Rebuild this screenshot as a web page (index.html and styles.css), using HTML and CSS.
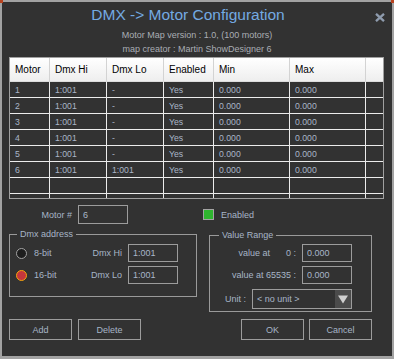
FILE: index.html
```html
<!DOCTYPE html>
<html lang="en">
<head>
    <meta charset="UTF-8">
    <title>DMX -> Motor Configuration</title>
    <link rel="stylesheet" href="styles.css">
</head>
<body>

    <div class="window">
        <!-- Title bar -->
        <div class="titlebar">
            <h1 class="title">DMX -&gt; Motor Configuration</h1>
            <button class="close-btn" title="Close">
                <svg width="10" height="9" viewBox="0 0 10 9">
                    <path d="M1 0.8 L9 8.2 M9 0.8 L1 8.2" stroke="#8e9bad" stroke-width="2.3" fill="none"/>
                </svg>
            </button>
        </div>

        <!-- Map info -->
        <div class="info">
            <p>Motor Map version : 1.0, (100 motors)</p>
            <p>map creator : Martin ShowDesigner 6</p>
        </div>

        <!-- Motor list -->
        <div class="grid">
            <table class="motor-table">
                <colgroup>
                    <col class="c-motor">
                    <col class="c-hi">
                    <col class="c-lo">
                    <col class="c-enabled">
                    <col class="c-min">
                    <col class="c-max">
                    <col>
                </colgroup>
                <thead>
                    <tr>
                        <th>Motor</th><th>Dmx Hi</th><th>Dmx Lo</th><th>Enabled</th><th>Min</th><th>Max</th><th></th>
                    </tr>
                </thead>
                <tbody>
                    <tr><td>1</td><td>1:001</td><td>-</td><td>Yes</td><td>0.000</td><td>0.000</td><td></td></tr>
                    <tr><td>2</td><td>1:001</td><td>-</td><td>Yes</td><td>0.000</td><td>0.000</td><td></td></tr>
                    <tr><td>3</td><td>1:001</td><td>-</td><td>Yes</td><td>0.000</td><td>0.000</td><td></td></tr>
                    <tr><td>4</td><td>1:001</td><td>-</td><td>Yes</td><td>0.000</td><td>0.000</td><td></td></tr>
                    <tr><td>5</td><td>1:001</td><td>-</td><td>Yes</td><td>0.000</td><td>0.000</td><td></td></tr>
                    <tr><td>6</td><td>1:001</td><td>1:001</td><td>Yes</td><td>0.000</td><td>0.000</td><td></td></tr>
                    <tr><td>&nbsp;</td><td></td><td></td><td></td><td></td><td></td><td></td></tr>
                    <tr><td>&nbsp;</td><td></td><td></td><td></td><td></td><td></td><td></td></tr>
                </tbody>
            </table>
        </div>

        <!-- Motor number and enabled -->
        <div class="motor-row">
            <label class="motor-label" for="motor-num">Motor #</label>
            <input class="field field-tall" id="motor-num" type="text" value="6">
            <input class="check" id="enabled" type="checkbox" checked>
            <label class="check-label" for="enabled">Enabled</label>
        </div>

        <div class="groups">
            <!-- Dmx address -->
            <fieldset class="group group-dmx">
                <legend>Dmx address</legend>
                <div class="dmx-row">
                    <input class="radio" id="bit8" type="radio" name="bits">
                    <label class="radio-label" for="bit8">8-bit</label>
                    <label class="dmx-label" for="dmx-hi">Dmx Hi</label>
                    <input class="field" id="dmx-hi" type="text" value="1:001">
                </div>
                <div class="dmx-row">
                    <input class="radio" id="bit16" type="radio" name="bits" checked>
                    <label class="radio-label" for="bit16">16-bit</label>
                    <label class="dmx-label" for="dmx-lo">Dmx Lo</label>
                    <input class="field" id="dmx-lo" type="text" value="1:001">
                </div>
            </fieldset>

            <!-- Value range -->
            <fieldset class="group group-range">
                <legend>Value Range</legend>
                <div class="range-row">
                    <label for="val-0">value at<span class="zero">0 :</span></label>
                    <input class="field" id="val-0" type="text" value="0.000">
                </div>
                <div class="range-row">
                    <label for="val-max">value at 65535 :</label>
                    <input class="field" id="val-max" type="text" value="0.000">
                </div>
                <div class="range-row unit-row">
                    <label>Unit :</label>
                    <div class="select">
                        <span class="select-text">&lt; no unit &gt;</span>
                        <span class="select-arrow">
                            <svg width="10" height="9" viewBox="0 0 10 9">
                                <path d="M0 0.5 H10 L5 8.5 Z" fill="#cfcfcf"/>
                            </svg>
                        </span>
                    </div>
                </div>
            </fieldset>
        </div>

        <!-- Buttons -->
        <div class="buttons">
            <button class="btn">Add</button>
            <button class="btn">Delete</button>
            <button class="btn btn-ok">OK</button>
            <button class="btn btn-cancel">Cancel</button>
        </div>
    </div>

</body>
</html>
```

FILE: styles.css
```css
* {
    box-sizing: border-box;
}

html, body {
    margin: 0;
}

body {
    background-color: #323232;
    font-family: "Liberation Sans", Arial, sans-serif;
    font-size: 9px;
    color: #a7b5c7;
}

.window {
    position: relative;
    width: 394px;
    height: 359px;
    border: 2px solid #a2a2a2;
    border-bottom-width: 3px;
    background-color: #323232;
}

/* little red corners of the frame */
.window::before, .window::after {
    content: "";
    position: absolute;
    top: -2px;
    width: 3px;
    height: 3px;
    background-color: #b8421e;
}

.window::before {
    left: -2px;
}

.window::after {
    right: -2px;
}

.titlebar {
    display: flex;
    height: 20px;
    margin-top: 3px;
}

.title {
    flex: 1;
    margin: 0;
    font-size: 15.5px;
    font-weight: normal;
    line-height: 20px;
    text-align: center;
    color: #74aae2;
}

.close-btn {
    width: 18px;
    height: 20px;
    margin: 0;
    padding: 5px 0 0 1px;
    border: none;
    background: none;
    text-align: left;
    line-height: 0;
    cursor: pointer;
}

.info {
    margin-top: 3px;
    text-align: center;
    line-height: 14px;
    color: #aaaeb4;
}

.info p {
    margin: 0;
}

/* table */
.grid {
    width: 375px;
    height: 142px;
    margin: 1px 0 0 7px;
    border: 1px solid #a0a0a0;
    overflow: hidden;
}

.motor-table {
    width: 373px;
    table-layout: fixed;
    border-collapse: separate;
    border-spacing: 0;
}

.c-motor { width: 40px; }
.c-hi { width: 57px; }
.c-lo { width: 57px; }
.c-enabled { width: 50px; }
.c-min { width: 76px; }
.c-max { width: 76px; }

.motor-table th {
    padding: 0 0 0 5px;
    background: linear-gradient(#ffffff, #eeeeee);
    border-right: 1px solid #d3d3d3;
    border-bottom: 1px solid #dcdcdc;
    font-size: 10px;
    font-weight: normal;
    line-height: 23px;
    text-align: left;
    color: #000000;
    white-space: nowrap;
    overflow: hidden;
}

.motor-table td {
    padding: 2px 0 0 5px;
    border-right: 1px solid #ececec;
    border-bottom: 1px solid #ececec;
    font-size: 8.7px;
    line-height: 13px;
    color: #a9b6c8;
    white-space: nowrap;
    overflow: hidden;
}

.motor-table th:last-child, .motor-table td:last-child {
    border-right: none;
}

/* inputs */
.field {
    width: 50px;
    height: 18px;
    padding: 0 4px;
    border: 1px solid #9c9c9c;
    background-color: #323232;
    font: inherit;
    color: #a9b6c8;
    outline: none;
}

.field-tall {
    height: 19px;
}

.motor-row {
    display: flex;
    align-items: center;
    height: 19px;
    margin: 6px 0 0 7px;
}

.motor-label {
    width: 63px;
    margin-right: 6px;
    text-align: right;
}

.check {
    appearance: none;
    width: 11px;
    height: 11px;
    margin: 0 0 0 75px;
    border: 1px solid #a4a4a4;
    background-color: #2fb52f;
}

.check-label {
    margin-left: 7px;
}

/* group boxes */
.groups {
    display: flex;
    align-items: flex-start;
    margin: 4px 0 0 7px;
}

.group {
    min-width: 0;
    margin: 0;
    border: 1px solid #9a9a9a;
}

.group legend {
    padding: 0 3px;
    line-height: 12px;
}

.group-dmx {
    width: 188px;
    padding: 4px 18px 12px 6px;
}

.group-dmx legend {
    margin-left: 1px;
}

.group-range {
    width: 163px;
    margin: 1px 0 0 12px;
    padding: 3px 19px 2px 6px;
}

.group-range legend {
    margin-left: 3px;
}

.dmx-row {
    display: flex;
    align-items: center;
    height: 18px;
}

.dmx-row + .dmx-row {
    margin-top: 4px;
}

.radio {
    appearance: none;
    width: 11px;
    height: 11px;
    margin: 0;
    border: 1px solid #a3a3a3;
    border-radius: 50%;
    background-color: #1e1e1e;
}

.radio:checked {
    border-color: #f2a60c;
    background-color: #c4363c;
}

.radio-label {
    margin-left: 7px;
}

.dmx-label {
    margin: 0 6px 0 auto;
}

.range-row {
    display: flex;
    align-items: center;
    justify-content: flex-end;
    height: 18px;
    margin-top: 4px;
}

.range-row:first-of-type {
    margin-top: 0;
}

.range-row label {
    margin-right: 6px;
}

.zero {
    margin-left: 16px;
}

.unit-row {
    height: 20px;
    margin-top: 5px;
}

.select {
    display: flex;
    width: 100px;
    height: 20px;
    border: 1px solid #9c9c9c;
}

.select-text {
    flex: 1;
    padding-left: 4px;
    line-height: 18px;
}

.select-arrow {
    display: flex;
    align-items: center;
    justify-content: center;
    width: 16px;
    background-color: #4b4b4b;
}

/* bottom buttons */
.buttons {
    display: flex;
    width: 363px;
    margin: 7px 0 0 7px;
}

.btn {
    width: 63px;
    height: 21px;
    margin-right: 6px;
    padding: 0;
    border: 1px solid #9c9c9c;
    background-color: #323232;
    font: inherit;
    color: #a7b5c7;
    cursor: pointer;
}

.btn-ok {
    margin-left: auto;
    margin-right: 5px;
}

.btn-cancel {
    margin-right: 0;
}
```
